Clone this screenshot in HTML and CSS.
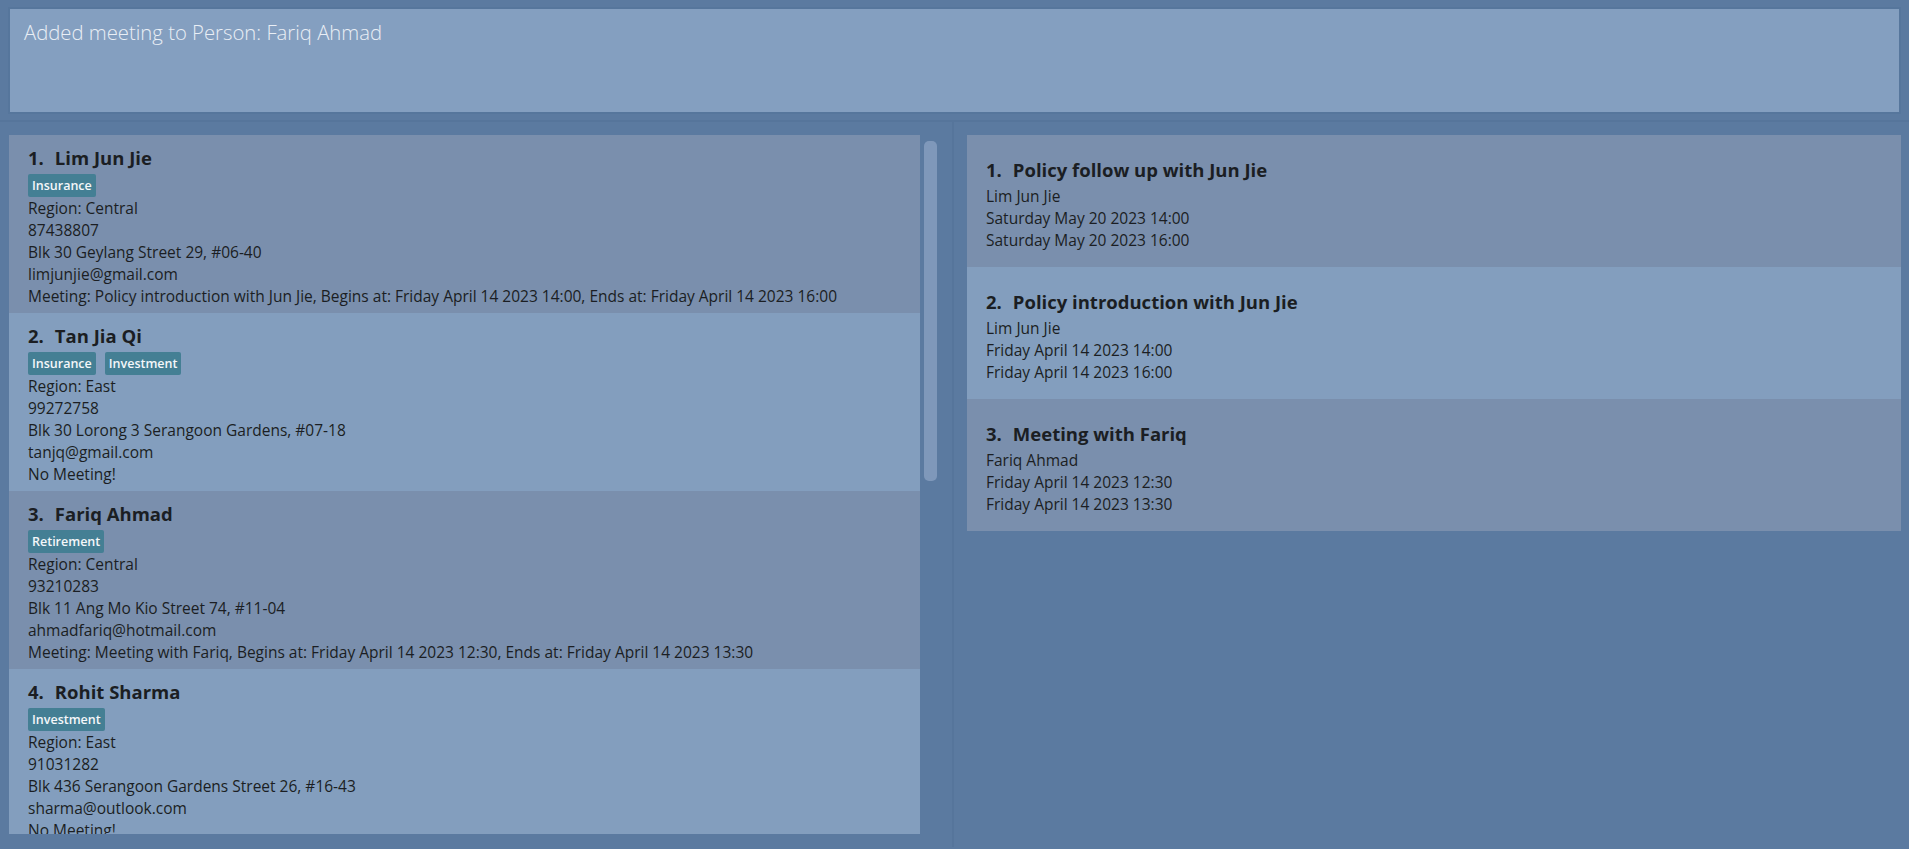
FILE: index.html
```html
<!DOCTYPE html>
<html>
<head>
<meta charset="utf-8">
<link rel="stylesheet" href="styles.css">
</head>
<body>
<div class="result-area">
  <div class="result-box">Added meeting to Person: Fariq Ahmad</div>
</div>
<div class="main">
  <div class="left-panel">
    <div class="person-list">
      <div class="card odd">
        <div class="title"><span class="idx">1.</span><span class="name">Lim Jun Jie</span></div>
        <div class="tags"><span class="tag">Insurance</span></div>
        <div class="line">Region: Central</div>
        <div class="line">87438807</div>
        <div class="line">Blk 30 Geylang Street 29, #06-40</div>
        <div class="line">limjunjie@gmail.com</div>
        <div class="line">Meeting: Policy introduction with Jun Jie, Begins at: Friday April 14 2023 14:00, Ends at: Friday April 14 2023 16:00</div>
      </div>
      <div class="card even">
        <div class="title"><span class="idx">2.</span><span class="name">Tan Jia Qi</span></div>
        <div class="tags"><span class="tag">Insurance</span><span class="tag">Investment</span></div>
        <div class="line">Region: East</div>
        <div class="line">99272758</div>
        <div class="line">Blk 30 Lorong 3 Serangoon Gardens, #07-18</div>
        <div class="line">tanjq@gmail.com</div>
        <div class="line">No Meeting!</div>
      </div>
      <div class="card odd">
        <div class="title"><span class="idx">3.</span><span class="name">Fariq Ahmad</span></div>
        <div class="tags"><span class="tag">Retirement</span></div>
        <div class="line">Region: Central</div>
        <div class="line">93210283</div>
        <div class="line">Blk 11 Ang Mo Kio Street 74, #11-04</div>
        <div class="line">ahmadfariq@hotmail.com</div>
        <div class="line">Meeting: Meeting with Fariq, Begins at: Friday April 14 2023 12:30, Ends at: Friday April 14 2023 13:30</div>
      </div>
      <div class="card even">
        <div class="title"><span class="idx">4.</span><span class="name">Rohit Sharma</span></div>
        <div class="tags"><span class="tag">Investment</span></div>
        <div class="line">Region: East</div>
        <div class="line">91031282</div>
        <div class="line">Blk 436 Serangoon Gardens Street 26, #16-43</div>
        <div class="line">sharma@outlook.com</div>
        <div class="line">No Meeting!</div>
      </div>
    </div>
    <div class="scroll-track"><div class="scroll-thumb"></div></div>
  </div>
  <div class="right-panel">
    <div class="meeting-list">
      <div class="mcard odd">
        <div class="mtitle"><span class="idx">1.</span><span class="name">Policy follow up with Jun Jie</span></div>
        <div class="line">Lim Jun Jie</div>
        <div class="line">Saturday May 20 2023 14:00</div>
        <div class="line">Saturday May 20 2023 16:00</div>
      </div>
      <div class="mcard even">
        <div class="mtitle"><span class="idx">2.</span><span class="name">Policy introduction with Jun Jie</span></div>
        <div class="line">Lim Jun Jie</div>
        <div class="line">Friday April 14 2023 14:00</div>
        <div class="line">Friday April 14 2023 16:00</div>
      </div>
      <div class="mcard odd">
        <div class="mtitle"><span class="idx">3.</span><span class="name">Meeting with Fariq</span></div>
        <div class="line">Fariq Ahmad</div>
        <div class="line">Friday April 14 2023 12:30</div>
        <div class="line">Friday April 14 2023 13:30</div>
      </div>
    </div>
  </div>
</div>
</body>
</html>
```

FILE: styles.css
```css
html, body {
  margin: 0;
  padding: 0;
}
body {
  width: 1909px;
  height: 849px;
  overflow: hidden;
  background: #5b7aa0;
  font-family: "Open Sans", "Noto Sans", sans-serif;
  color: #1b1e23;
}
.result-area {
  height: 122px;
  box-sizing: border-box;
  padding: 7px 8px 8px 8px;
  border-bottom: 2px solid #56759b;
}
.result-box {
  height: 107px;
  box-sizing: border-box;
  border: 2px solid #56769c;
  background: #849fc0;
  color: #e9eef5;
  font-weight: 300;
  font-size: 20.3px;
  padding: 10px 14px;
  line-height: 26px;
}
.main {
  display: flex;
  height: 725px;
}
.left-panel {
  width: 954px;
  box-sizing: border-box;
  padding: 13px 15px 13px 9px;
  border-right: 2px solid #56759b;
  display: flex;
}
.person-list {
  width: 913px;
  height: 699px;
  overflow: hidden;
}
.scroll-track {
  width: 17px;
  padding-left: 4px;
  box-sizing: border-box;
  padding-top: 6px;
}
.scroll-thumb {
  width: 13px;
  height: 340px;
  background: #7f98ba;
  border-radius: 5px;
}
.card {
  height: 178px;
  box-sizing: border-box;
  padding: 11px 19px 0 19px;
}
.odd { background: #7a8fad; }
.even { background: #839ebe; }
.title, .mtitle {
  font-weight: 700;
  font-size: 18.5px;
  line-height: 24px;
  display: flex;
  gap: 11px;
  white-space: nowrap;
}
.tags {
  display: flex;
  gap: 9px;
  margin-top: 4px;
  height: 23px;
}
.tag {
  background: #447f94;
  color: #f4f7fa;
  font-size: 12.5px;
  font-weight: 600;
  line-height: 23px;
  padding: 0 4px;
  border-radius: 2px;
}
.line {
  font-size: 15.5px;
  line-height: 22px;
  white-space: nowrap;
}
.right-panel {
  flex: 1;
  padding: 13px 8px 13px 13px;
}
.mcard {
  height: 132px;
  box-sizing: border-box;
  padding: 23px 19px 0 19px;
}
.mtitle {
  margin-bottom: 3px;
}
```
